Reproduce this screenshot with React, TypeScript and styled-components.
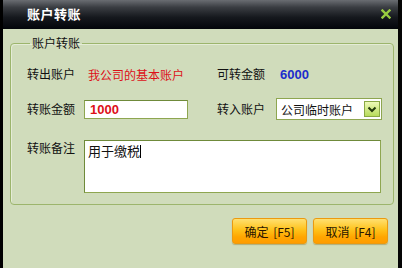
import React from 'react'
import styled, { createGlobalStyle } from 'styled-components'

const GlobalStyle = createGlobalStyle`
  html, body {
    margin: 0;
    padding: 0;
    background: #000;
  }
  body {
    font-family: "Noto Sans CJK SC", "DejaVu Sans", sans-serif;
    font-size: 12px;
  }
`

const Window = styled.div`
  width: 402px;
  height: 268px;
  display: flex;
  flex-direction: column;
  box-sizing: border-box;
  border-left: 3px solid #000;
  border-right: 4px solid #050505;
  background: #d0dcbb;
`

const TitleBar = styled.div`
  height: 29px;
  flex: none;
  display: flex;
  align-items: center;
  justify-content: space-between;
  padding: 0 7px 2px 24px;
  box-sizing: border-box;
  background: linear-gradient(#6a6d72 0%, #3a3d42 25%, #15181d 60%, #03050a 100%);
`

const Title = styled.span`
  color: #fff;
  font-size: 13px;
  font-weight: bold;
  letter-spacing: 0.5px;
`

const Body = styled.div`
  flex: 1;
  display: flex;
  flex-direction: column;
  padding: 7px 4px 0 7px;
`

const Group = styled.fieldset`
  margin: 0;
  padding: 13px 0 11px 16px;
  border: 1px solid #9cb56c;
  border-radius: 4px;
  box-shadow: inset 1px 1px 0 #e4ecd6;
`

const Legend = styled.legend`
  margin-left: 3px;
  padding: 0 2px;
  line-height: 14px;
  color: #111;
`

const Form = styled.div`
  display: grid;
  grid-template-columns: 57px 133px 59px 1fr;
  grid-template-rows: 22px 22px auto;
  row-gap: 13px;
  align-items: center;
`

const Label = styled.span<{ $top?: boolean }>`
  color: #111;
  line-height: 14px;
  align-self: ${p => (p.$top ? 'start' : 'center')};
  margin-top: ${p => (p.$top ? '8px' : '0')};
`

const Value = styled.span<{ $tone: 'red' | 'blue' }>`
  padding-left: 4px;
  color: ${p => (p.$tone === 'red' ? '#dd1018' : '#1c2ccc')};
  font-weight: ${p => (p.$tone === 'blue' ? 'bold' : 'normal')};
  font-family: ${p => (p.$tone === 'blue' ? '"Liberation Sans", sans-serif' : 'inherit')};
  font-size: ${p => (p.$tone === 'blue' ? '13px' : '12px')};
`

const Input = styled.div`
  width: 104px;
  height: 19px;
  box-sizing: border-box;
  background: #fff;
  border: 1px solid #8ea650;
  border-top-color: #6f8a3a;
  padding-left: 5px;
  display: flex;
  align-items: center;
  color: #dd1018;
  font-family: "Liberation Sans", sans-serif;
  font-weight: bold;
  font-size: 13px;
`

const Select = styled.div`
  width: 106px;
  height: 22px;
  box-sizing: border-box;
  background: #fff;
  border: 1px solid #8ea650;
  display: flex;
  align-items: center;
  justify-content: space-between;
  padding: 0 1px 0 4px;
  color: #111;
`

const DropButton = styled.span`
  width: 16px;
  height: 16px;
  box-sizing: border-box;
  border: 1px solid #8aa844;
  background: linear-gradient(#eefab8, #b8dc5c);
  display: flex;
  align-items: center;
  justify-content: center;
`

const Note = styled.div`
  grid-column: 2 / 5;
  width: 297px;
  height: 53px;
  margin-top: 7px;
  box-sizing: border-box;
  background: #fff;
  border: 1px solid #8ea650;
  border-top-color: #6f8a3a;
  border-left-color: #6f8a3a;
  padding: 2px 3px;
  line-height: 16px;
  color: #111;
  font-size: 13px;
  align-self: start;
`

const Caret = styled.span`
  display: inline-block;
  width: 1px;
  height: 13px;
  background: #000;
  vertical-align: -2px;
`

const Actions = styled.div`
  display: flex;
  justify-content: flex-end;
  gap: 6px;
  margin: 13px 6px 0 0;
`

const Button = styled.button`
  width: 75px;
  height: 26px;
  border: 1px solid #eb9a10;
  border-radius: 3px;
  background: linear-gradient(#ffe070 0%, #ffc21a 45%, #ffa600 75%, #ff9c00 100%);
  box-shadow: 0 1px 1px rgba(120, 90, 0, 0.35);
  color: #2a1500;
  font-family: "Noto Sans CJK SC", sans-serif;
  font-size: 12px;
  padding: 0;
  word-spacing: 2px;
`

const CloseIcon = () => (
  <svg width="10" height="10" viewBox="0 0 10 10">
    <path d="M1.5 1.5 L8.5 8.5 M8.5 1.5 L1.5 8.5" stroke="#98cc40" strokeWidth="2.4" strokeLinecap="square" />
  </svg>
)

const Chevron = () => (
  <svg width="10" height="7" viewBox="0 0 10 7">
    <path d="M1.5 1.5 L5 5 L8.5 1.5" stroke="#243a0c" strokeWidth="2" fill="none" />
  </svg>
)

const App = () => {
  return (
    <Window>
      <GlobalStyle />
      <TitleBar>
        <Title>账户转账</Title>
        <CloseIcon />
      </TitleBar>
      <Body>
        <Group>
          <Legend>账户转账</Legend>
          <Form>
            <Label>转出账户</Label>
            <Value $tone="red">我公司的基本账户</Value>
            <Label>可转金额</Label>
            <Value $tone="blue">6000</Value>

            <Label>转账金额</Label>
            <Input>1000</Input>
            <Label>转入账户</Label>
            <Select>
              公司临时账户
              <DropButton>
                <Chevron />
              </DropButton>
            </Select>

            <Label $top>转账备注</Label>
            <Note>
              用于缴税
              <Caret />
            </Note>
          </Form>
        </Group>
        <Actions>
          <Button>确定 [F5]</Button>
          <Button>取消 [F4]</Button>
        </Actions>
      </Body>
    </Window>
  )
}

export default App
